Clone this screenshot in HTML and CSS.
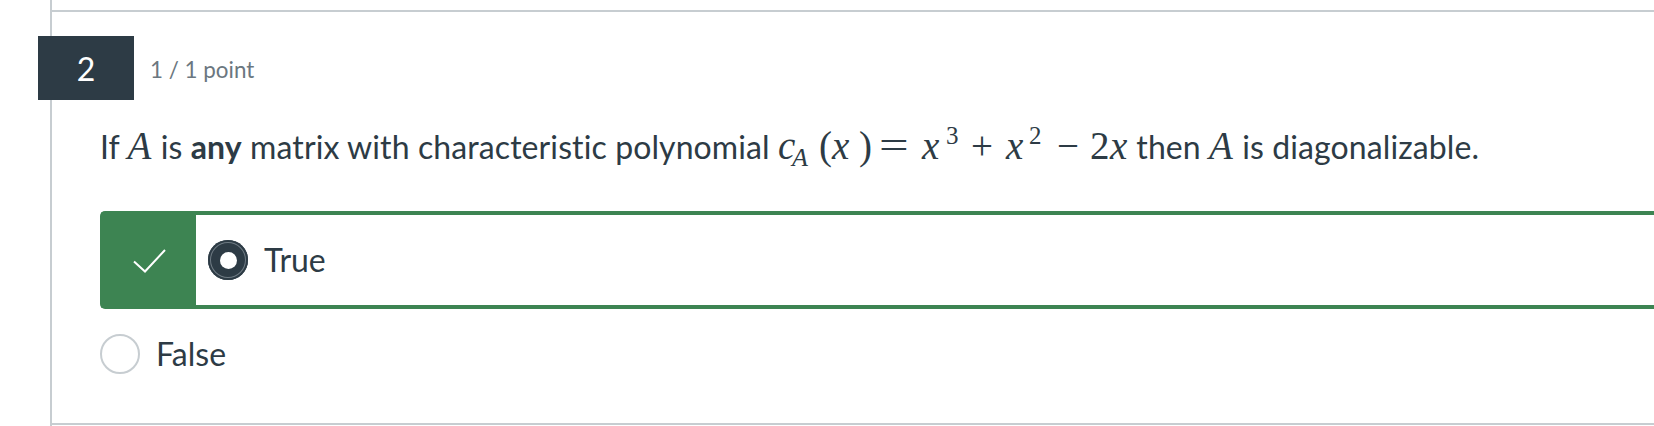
FILE: index.html
```html
<!DOCTYPE html>
<html lang="en">
<head>
<meta charset="utf-8">
<title>Quiz question 2</title>
<link rel="stylesheet" href="styles.css">
</head>
<body>
<div class="quiz">
  <div class="prev-tail"></div>
  <section class="question">
    <header class="q-head">
      <div class="q-num">2</div>
      <div class="q-points">1 / 1 point</div>
    </header>
    <div class="q-body">
      <p class="q-text">If <span class="mi var-a">A</span> is <b>any</b> matrix with characteristic polynomial <span class="math"><span class="mi g g-c">c</span><span class="mi g sub g-sub">A</span><span class="mo g g-lp">(</span><span class="mi g g-x1">x</span><span class="mo g g-rp">)</span><span class="mo g g-eq">=</span><span class="mi g g-x2">x</span><span class="mn g sup g-s3">3</span><span class="mo g g-plus">+</span><span class="mi g g-x3">x</span><span class="mn g sup g-s2">2</span><span class="mo g g-minus">−</span><span class="mn g g-two">2</span><span class="mi g g-x4">x</span></span> then <span class="mi var-a">A</span> is diagonalizable.</p>
      <div class="options">
        <div class="opt correct">
          <div class="flag">
            <svg class="check" viewBox="0 0 33 24" width="33" height="24" aria-hidden="true"><polyline points="1,12.5 12,22.5 32,1" fill="none" stroke="#ffffff" stroke-width="2"/></svg>
          </div>
          <div class="opt-main">
            <span class="radio checked"><span class="dot"></span></span>
            <span class="label">True</span>
          </div>
        </div>
        <div class="opt">
          <div class="opt-main plain">
            <span class="radio"></span>
            <span class="label">False</span>
          </div>
        </div>
      </div>
    </div>
  </section>
</div>
</body>
</html>
```
FILE: styles.css
```css
html, body {
  margin: 0;
  padding: 0;
  background: #ffffff;
  overflow: hidden;
}

body {
  font-family: Lato, "Liberation Sans", sans-serif;
  color: #2d3b45;
  height: 426px;
}

.quiz {
  margin-left: 50px;
  border-left: 2px solid #c7cdd1;
  height: 426px;
}

.prev-tail {
  height: 10px;
}

.question {
  border-top: 2px solid #c7cdd1;
  border-bottom: 2px solid #c7cdd1;
  padding-top: 24px;
  padding-bottom: 24px;
}

.q-head {
  display: flex;
  align-items: center;
  margin-left: -14px;
}

.q-num {
  width: 96px;
  height: 64px;
  background: #2d3b45;
  color: #ffffff;
  font-size: 32px;
  display: flex;
  align-items: center;
  justify-content: center;
}

.q-points {
  margin-left: 16px;
  font-size: 22.4px;
  color: #6b7780;
  padding-top: 2px;
}

.q-body {
  padding-left: 48px;
}

.q-text {
  margin: 22px 0 40px 0;
  font-size: 32px;
  line-height: 48px;
  letter-spacing: 0.1px;
  white-space: nowrap;
}

.q-text b {
  font-weight: 700;
}

.mi, .mo, .mn {
  font-family: "Liberation Serif", "DejaVu Serif", serif;
  font-size: 39px;
  letter-spacing: 0;
}

.mi {
  font-style: italic;
}

.var-a {
  margin-right: 1px;
}

.math {
  white-space: nowrap;
}

.g {
  display: inline-block;
  text-align: left;
}

.sub {
  font-size: 26px;
  vertical-align: -7px;
  line-height: 1;
}

.sup {
  font-size: 25px;
  vertical-align: 15px;
  line-height: 1;
}

.g-c { width: 14px; }
.g-sub { width: 27px; }
.g-lp { width: 13px; }
.g-x1 { width: 27px; }
.g-rp { width: 20px; }
.g-eq { width: 43px; transform: scaleX(1.35); transform-origin: left center; }
.g-x2 { width: 24px; }
.g-s3 { width: 25px; }
.g-plus { width: 35px; }
.g-x3 { width: 23px; }
.g-s2 { width: 28px; }
.g-minus { width: 33px; }
.g-two { width: 20px; }
.g-x4 { width: 18px; }

.options {
  display: flex;
  flex-direction: column;
}

.opt {
  display: flex;
  height: 90px;
}

.opt.correct {
  border: 4px solid #3d8452;
  border-right: 0;
  border-radius: 5px 0 0 5px;
}

.flag {
  width: 92px;
  background: #3d8452;
  display: flex;
  align-items: center;
  justify-content: center;
}

.check {
  display: block;
  margin-top: 2px;
  margin-left: -1px;
}

.opt-main {
  display: flex;
  align-items: center;
  gap: 16px;
  padding-left: 12px;
}

.opt-main.plain {
  padding-left: 0;
}

.radio {
  width: 40px;
  height: 40px;
  box-sizing: border-box;
  border-radius: 50%;
  border: 2px solid #c7cdd1;
  background: #ffffff;
  display: flex;
  align-items: center;
  justify-content: center;
  flex: none;
}

.radio.checked {
  border: 0;
  background: #2d3b45;
  box-shadow: inset 0 0 0 2px #2d3b45, inset 0 0 0 3px #6e7a83;
}

.radio .dot {
  width: 17px;
  height: 17px;
  border-radius: 50%;
  background: #ffffff;
}

.label {
  font-size: 32px;
  line-height: 40px;
}
```
